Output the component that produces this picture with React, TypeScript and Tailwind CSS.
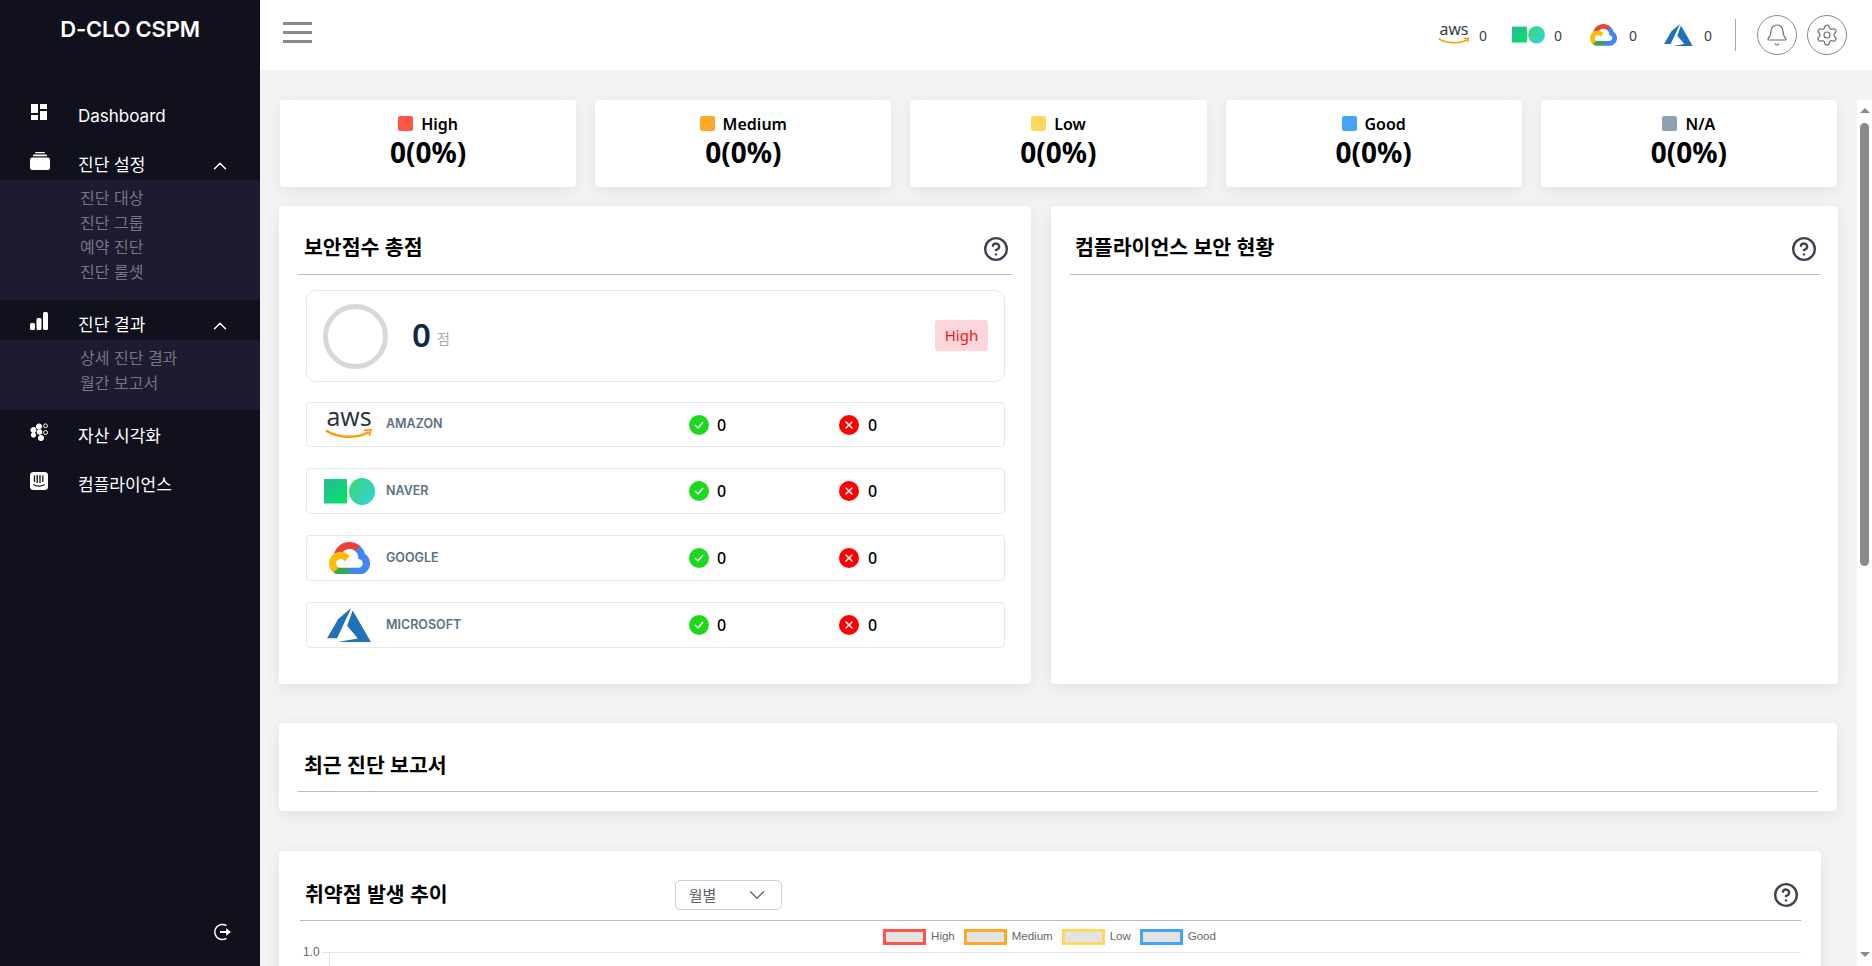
import { Bell, ChevronDown, ChevronUp, CircleHelp, Settings } from 'lucide-react';

const KR = "font-['Noto_Sans','Noto_Sans_CJK_KR',sans-serif]";
const NAV = "font-['Inter','Noto_Sans_CJK_KR',sans-serif]";

function DashIcon() {
  return (
    <svg width="16" height="16" viewBox="0 0 16 16" fill="#fff" className="ml-px">
      <rect x="0" y="0" width="7" height="9" />
      <rect x="9" y="0" width="7" height="5" />
      <rect x="0" y="11" width="7" height="5" />
      <rect x="9" y="7" width="7" height="9" />
    </svg>
  );
}

function StackIcon() {
  return (
    <svg width="20" height="18" viewBox="0 0 20 18" fill="#fff">
      <rect x="5" y="0" width="10" height="1.2" rx="0.6" />
      <rect x="3" y="2.6" width="14" height="1.6" rx="0.8" />
      <rect x="0" y="5.5" width="20" height="12.5" rx="2.5" />
    </svg>
  );
}

function BarsIcon() {
  return (
    <svg width="18" height="18" viewBox="0 0 18 18" fill="#fff">
      <rect x="0" y="11" width="5" height="7" rx="1.5" />
      <rect x="6.5" y="6" width="5" height="12" rx="1.5" />
      <rect x="13" y="0" width="5" height="18" rx="1.5" />
    </svg>
  );
}

function NodesIcon() {
  return (
    <svg width="19" height="18" viewBox="0 0 19 18" fill="#fff" stroke="#fff">
      <circle cx="3.5" cy="7" r="2.6" />
      <circle cx="9" cy="3.5" r="2.6" />
      <circle cx="15.5" cy="2.8" r="1.9" fill="none" strokeWidth="1" />
      <circle cx="9.5" cy="9" r="2.4" />
      <circle cx="3.5" cy="12" r="2.2" />
      <circle cx="15.5" cy="9.5" r="2" fill="none" strokeWidth="1" />
      <circle cx="11" cy="15" r="2.6" />
    </svg>
  );
}

function ComplianceIcon() {
  return (
    <svg width="18" height="18" viewBox="0 0 18 18">
      <rect width="18" height="18" rx="3.5" fill="#fff" />
      <path d="M4.5 3.5v6.5M7.2 3v8M10 3v8M12.8 3.5v6.5" stroke="#11121f" strokeWidth="1.3" />
      <path d="M3.5 12.5c3 2.2 8 2.2 11 0" stroke="#11121f" strokeWidth="1.3" fill="none" />
    </svg>
  );
}

function LogoutIcon() {
  return (
    <svg width="18" height="18" viewBox="0 0 18 18" fill="none" stroke="#fff">
      <path d="M13.5 2.6A7.6 7.6 0 1 0 13.5 15.4" strokeWidth="1.5" />
      <path d="M7 9h9" strokeWidth="2" />
      <path d="M13.5 5.6L17.5 9l-4 3.4z" fill="#fff" strokeWidth="0.5" />
    </svg>
  );
}

function AwsLogo({ big }: { big?: boolean }) {
  return (
    <span className={`relative inline-block ${big ? 'w-[48px] h-[30px]' : 'w-[32px] h-[20px]'}`}>
      <span
        className={`absolute inset-x-0 text-center font-['Open_Sans',sans-serif] font-medium text-[#252f3e] ${
          big ? 'top-[-9px] text-[25px] leading-[30px]' : 'top-[-6px] text-[16px] leading-[20px]'
        }`}
      >
        aws
      </span>
      <svg className="absolute inset-x-0 bottom-0" width={big ? 48 : 32} height={big ? 12 : 8} viewBox="0 0 48 12">
        <path d="M1 2.5C12 10 32 11 44 4" stroke="#f90" strokeWidth="2.4" fill="none" />
        <path d="M39 2.5l7-.8-1.6 6.2" stroke="#f90" strokeWidth="1.8" fill="none" />
      </svg>
    </span>
  );
}

function NaverLogo({ id, w }: { id: string; w: number }) {
  return (
    <svg width={w} height={(w * 27) / 51} viewBox="0 0 51 27">
      <defs>
        <linearGradient id={`${id}a`} x1="0" y1="0" x2="1" y2="1">
          <stop offset="0" stopColor="#2bb89a" />
          <stop offset="1" stopColor="#00e55f" />
        </linearGradient>
        <linearGradient id={`${id}b`} x1="0" y1="0" x2="1" y2="0.6">
          <stop offset="0" stopColor="#3bd96b" />
          <stop offset="1" stopColor="#2fd3d0" />
        </linearGradient>
      </defs>
      <rect x="0" y="1" width="23" height="24.5" fill={`url(#${id}a)`} />
      <ellipse cx="38" cy="13.5" rx="13" ry="13.5" fill={`url(#${id}b)`} />
    </svg>
  );
}

function GoogleLogo({ w }: { w: number }) {
  return (
    <svg width={w} viewBox="0 0 256 206">
      <path fill="#EA4335" d="m170.252 56.819l22.253-22.253l1.483-9.37C153.437-11.677 88.976-7.496 52.42 33.92C42.267 45.423 34.734 59.764 30.717 74.573l7.97-1.123l44.505-7.34l3.436-3.513c19.797-21.742 53.27-24.667 76.128-6.168z" />
      <path fill="#4285F4" d="M224.205 73.918a100.249 100.249 0 0 0-30.217-48.722l-31.232 31.232a55.515 55.515 0 0 1 20.379 44.037v5.544c15.35 0 27.797 12.445 27.797 27.796c0 15.352-12.446 27.485-27.797 27.485h-55.671l-5.466 5.934v33.34l5.466 5.231h55.67c39.93.311 72.553-31.494 72.864-71.424a72.303 72.303 0 0 0-31.793-60.453" />
      <path fill="#34A853" d="M71.87 205.796h55.593V161.29H71.87a27.275 27.275 0 0 1-11.399-2.498l-7.887 2.42l-22.409 22.253l-1.952 7.574c12.567 9.489 27.9 14.825 43.647 14.757" />
      <path fill="#FBBC05" d="M71.87 61.425C31.94 61.664-.237 94.228.001 134.159a72.301 72.301 0 0 0 28.222 56.88l32.248-32.246c-13.99-6.322-20.208-22.786-13.887-36.776c6.32-13.99 22.786-20.208 36.775-13.888a27.796 27.796 0 0 1 13.887 13.888l32.248-32.248A72.224 72.224 0 0 0 71.87 61.425" />
    </svg>
  );
}

function AzureLogo({ w }: { w: number }) {
  return (
    <svg width={w} viewBox="0 2.7 24 18.6">
      <path fill="#2072b8" d="M5.483 21.3H24L14.025 4.013l-3.038 8.347 5.836 6.938L5.483 21.3zM13.23 2.7L6.105 8.677 0 19.253h5.505v.014L13.23 2.7z" />
    </svg>
  );
}

function Check() {
  return (
    <svg width="20" height="20" viewBox="0 0 20 20">
      <circle cx="10" cy="10" r="10" fill="#1ed81e" />
      <path d="M6 10l3 3 5-6" stroke="#fff" strokeWidth="1.5" fill="none" />
    </svg>
  );
}

function Cross() {
  return (
    <svg width="20" height="20" viewBox="0 0 20 20">
      <circle cx="10" cy="10" r="10" fill="#ff0000" />
      <path d="M6.5 6.5l7 7M13.5 6.5l-7 7" stroke="#fff" strokeWidth="1.5" />
    </svg>
  );
}

function Help() {
  return <CircleHelp size={26} strokeWidth={2.2} className="text-[#3f4254]" />;
}

const stats = [
  { label: 'High', color: 'bg-[#ff5447]' },
  { label: 'Medium', color: 'bg-[#ffa726]' },
  { label: 'Low', color: 'bg-[#fdd85d]' },
  { label: 'Good', color: 'bg-[#42a5f5]' },
  { label: 'N/A', color: 'bg-[#8fa0b0]' },
];

const clouds = [
  { name: 'AMAZON', logo: <AwsLogo big />, h: 'h-[45px]' },
  { name: 'NAVER', logo: <NaverLogo id="row" w={51} />, h: 'h-[46px]' },
  { name: 'GOOGLE', logo: <GoogleLogo w={41} />, h: 'h-[46px]' },
  { name: 'MICROSOFT', logo: <AzureLogo w={44} />, h: 'h-[46px]' },
];

const legend = [
  { label: 'High', border: 'border-[#ff5447]' },
  { label: 'Medium', border: 'border-[#ffa726]' },
  { label: 'Low', border: 'border-[#fdd85d]' },
  { label: 'Good', border: 'border-[#42a5f5]' },
];

function SubMenu({ items, h }: { items: string[]; h: string }) {
  return (
    <div className={`${h} bg-[#1c1b30] pl-[80px] pt-[6px]`}>
      {items.map((t) => (
        <div key={t} className="h-[24.5px] leading-[24.5px] text-[16px] text-[#77767f]">
          {t}
        </div>
      ))}
    </div>
  );
}

function NavRow({ icon, label, h, open }: { icon: React.ReactNode; label: string; h: string; open?: boolean }) {
  return (
    <div className={`${h} flex items-center`}>
      <span className="w-[78px] pl-[30px] flex items-center -mt-[4px]">{icon}</span>
      <span className="text-[17px] text-white mt-[5px]">{label}</span>
      {open && <ChevronUp size={22} strokeWidth={1.6} className="text-white ml-auto mr-[29px] mt-[6px]" />}
    </div>
  );
}

function CardTitle({ children }: { children: React.ReactNode }) {
  return <h2 className={`${KR} text-[20.5px] font-semibold text-black leading-[28px]`}>{children}</h2>;
}

export default function App() {
  return (
    <div className={`${KR} flex w-full h-[966px] overflow-hidden bg-[#f3f3f3]`}>
      <aside className={`${NAV} w-[260px] shrink-0 bg-[#10111d] flex flex-col`}>
        <div className="h-[89px] pt-[14px] text-center text-[22px] font-semibold leading-[30px] tracking-[-0.2px] text-white">
          D-CLO CSPM
        </div>
        <NavRow icon={<DashIcon />} label="Dashboard" h="h-[50px]" />
        <div className="h-[7px]" />
        <NavRow icon={<StackIcon />} label="진단 설정" h="h-[34px]" open />
        <SubMenu items={['진단 대상', '진단 그룹', '예약 진단', '진단 룰셋']} h="h-[120px]" />
        <div className="h-[6px]" />
        <NavRow icon={<BarsIcon />} label="진단 결과" h="h-[34px]" open />
        <SubMenu items={['상세 진단 결과', '월간 보고서']} h="h-[70px]" />
        <NavRow icon={<NodesIcon />} label="자산 시각화" h="h-[48px]" />
        <NavRow icon={<ComplianceIcon />} label="컴플라이언스" h="h-[50px]" />
        <div className="mt-auto h-[43px] pl-[213px]">
          <LogoutIcon />
        </div>
      </aside>

      <div className="flex-1 min-w-0 flex flex-col">
        <header className="h-[70px] shrink-0 bg-white flex items-center pl-[23px] pr-[25px]">
          <div className="flex flex-col gap-[6px] -mt-[6px]">
            <span className="block w-[29px] h-[3px] bg-[#8a8a8a]" />
            <span className="block w-[29px] h-[3px] bg-[#8a8a8a]" />
            <span className="block w-[29px] h-[3px] bg-[#8a8a8a]" />
          </div>
          <div className="ml-auto flex items-center text-[14px] text-[#333f4d]">
            <AwsLogo />
            <span className="ml-[9px] w-[33px]">0</span>
            <NaverLogo id="top" w={33} />
            <span className="ml-[9px] w-[36px]">0</span>
            <GoogleLogo w={27} />
            <span className="ml-[12px] w-[35px]">0</span>
            <AzureLogo w={29} />
            <span className="ml-[11px] w-[31px]">0</span>
            <span className="w-px h-[32px] bg-[#a9a9a9]" />
            <span className="ml-[21px] w-[40px] h-[40px] rounded-full border border-[#8a8a8a] flex items-center justify-center">
              <Bell size={24} strokeWidth={1.2} className="text-[#6f6f6f]" />
            </span>
            <span className="ml-[10px] w-[40px] h-[40px] rounded-full border border-[#8a8a8a] flex items-center justify-center">
              <Settings size={24} strokeWidth={1.2} className="text-[#6f6f6f]" />
            </span>
          </div>
        </header>

        <div className="flex-1 min-h-0 flex">
          <main className="flex-1 min-w-0 overflow-hidden pl-[20px] pr-[20px] pt-[30px]">
            <div className="grid grid-cols-5 gap-[19px]">
              {stats.map((s) => (
                <div key={s.label} className="h-[87px] bg-white rounded-[4px] shadow-[0_4px_14px_rgba(0,0,0,0.07)] flex flex-col items-center pt-[13px]">
                  <div className="flex items-center gap-[8px] h-[20px]">
                    <span className={`w-[15px] h-[15px] rounded-[2px] ${s.color}`} />
                    <span className="text-[16px] font-semibold text-black leading-[20px] mt-[2px]">{s.label}</span>
                  </div>
                  <div className="text-[28px] font-bold text-black leading-[36px] mt-[1px]">0(0%)</div>
                </div>
              ))}
            </div>

            <div className="mt-[19px] -ml-px -mr-px flex gap-[20px] h-[478px]">
              <section className="w-[752px] shrink-0 bg-white rounded-[4px] shadow-[0_4px_16px_rgba(0,0,0,0.08)] pt-[27px] pl-[19px] pr-[19px]">
                <div className="h-[42px] border-b border-[#b4b7d6] pl-[6px] pr-[3px] flex items-start justify-between">
                  <CardTitle>보안점수 총점</CardTitle>
                  <span className="mt-[3px]"><Help /></span>
                </div>
                <div className="mt-[15px] ml-[8px] mr-[7px] h-[92px] rounded-[10px] border border-[#e4e8ef] flex items-center pl-[16px] pr-[16px]">
                  <span className="w-[65px] h-[65px] rounded-full border-[5px] border-[#d8d8d8]" />
                  <span className="ml-[24px] -mt-[3px] text-[33px] leading-[40px] font-semibold text-[#0f2a47]">0</span>
                  <span className="ml-[6px] mt-[4px] text-[14px] text-[#a3a9b3]">점</span>
                  <span className="ml-auto -mt-[1px] w-[53px] h-[31px] rounded-[3px] bg-[#fcd6da] text-[#f0141e] text-[15px] flex items-center justify-center">
                    High
                  </span>
                </div>
                <div className="mt-[20px] ml-[8px] mr-[7px] flex flex-col gap-[21px]">
                  {clouds.map((c) => (
                    <div key={c.name} className={`${c.h} rounded-[4px] border border-[#e4e8ef] flex items-center`}>
                      <span className="w-[79px] flex justify-center pl-[5px]">{c.logo}</span>
                      <span className={`${NAV} w-[303px] text-[12.5px] font-semibold text-[#5a7184]`}>{c.name}</span>
                      <span className="w-[150px] flex items-center gap-[8px]">
                        <Check />
                        <span className="text-[16px] font-medium text-black">0</span>
                      </span>
                      <span className="flex items-center gap-[9px]">
                        <Cross />
                        <span className="text-[16px] font-medium text-black">0</span>
                      </span>
                    </div>
                  ))}
                </div>
              </section>

              <section className="flex-1 min-w-0 bg-white rounded-[4px] shadow-[0_4px_16px_rgba(0,0,0,0.08)] pt-[27px] pl-[19px] pr-[18px]">
                <div className="h-[42px] border-b border-[#b4b7d6] pl-[5px] pr-[3px] flex items-start justify-between">
                  <CardTitle>컴플라이언스 보안 현황</CardTitle>
                  <span className="mt-[3px]"><Help /></span>
                </div>
              </section>
            </div>

            <section className="mt-[39px] -ml-px h-[88px] bg-white rounded-[4px] shadow-[0_4px_16px_rgba(0,0,0,0.08)] pt-[28px] pl-[19px] pr-[19px]">
              <div className="h-[41px] border-b border-[#b4b7d6] pl-[6px]">
                <CardTitle>최근 진단 보고서</CardTitle>
              </div>
            </section>

            <section className="mt-[40px] -ml-px mr-[16px] bg-white rounded-[4px] shadow-[0_4px_16px_rgba(0,0,0,0.08)] pt-[29px] pl-[21px] pr-[20px] pb-[40px]">
              <div className="h-[41px] border-b border-[#b4b7d6] pl-[5px] pr-[2px] flex items-start">
                <CardTitle>취약점 발생 추이</CardTitle>
                <span className="ml-[227px] w-[107px] h-[30px] rounded-[5px] border border-[#c9cdd6] flex items-center justify-between pl-[13px] pr-[11px] text-[15px] text-[#5b5f66]">
                  월별
                  <ChevronDown size={26} strokeWidth={1.3} className="text-[#5b6878]" />
                </span>
                <span className="ml-auto mt-[2px]"><Help /></span>
              </div>
              <div className="mt-[7px] -ml-[2px] flex justify-center items-center gap-[9px] h-[18px] font-['Liberation_Sans',sans-serif] text-[11.5px] text-[#666]">
                {legend.map((l) => (
                  <span key={l.label} className="flex items-center gap-[5px]">
                    <span className={`w-[43px] h-[16px] border-[3px] ${l.border} bg-[#e3e3e3]`} />
                    {l.label}
                  </span>
                ))}
              </div>
              <div className="mt-[6px] flex font-['Liberation_Sans',sans-serif] text-[12px] text-[#666]">
                <span className="w-[19px] -mt-[7px] ml-[3px] leading-[14px]">1.0</span>
                <div className="flex-1 h-[200px] border-t border-[#e2e6ec]">
                  <div className="ml-[7px] h-full border-l border-[#e2e6ec]" />
                </div>
              </div>
            </section>
          </main>

          <div className="w-[15px] shrink-0 mt-[30px] bg-white flex flex-col items-center">
            <span className="mt-[8px] w-0 h-0 border-x-[5px] border-x-transparent border-b-[5px] border-b-[#8a8a8a]" />
            <span className="mt-[10px] w-[9px] h-[443px] rounded-t-[5px] rounded-b-[5px] bg-[#8a8a8a]" />
            <span className="mt-auto mb-[9px] w-0 h-0 border-x-[5px] border-x-transparent border-t-[5px] border-t-[#8a8a8a]" />
          </div>
        </div>
      </div>
    </div>
  );
}
